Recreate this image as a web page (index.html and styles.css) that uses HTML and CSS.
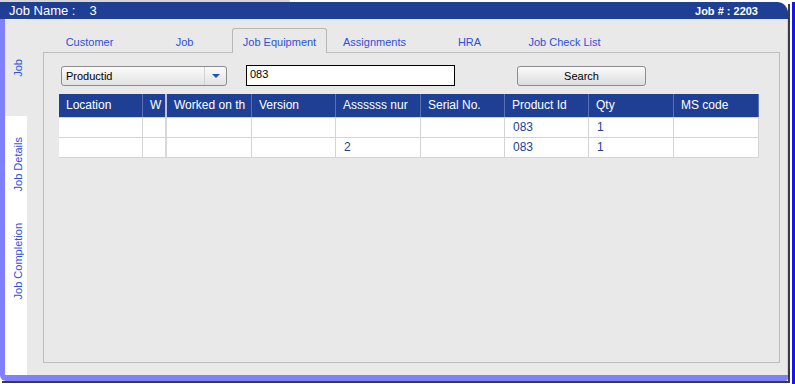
FILE: index.html
```html
<!DOCTYPE html>
<html lang="en">
<head>
    <meta charset="UTF-8">
    <title>Job Equipment</title>
    <link rel="stylesheet" href="styles.css">
</head>
<body>
    <div class="window">
        <div class="topline"></div>
        <div class="screen">
            <div class="frame">
                <div class="titlebar">
                    <span class="job-name">Job Name :<span class="job-val">3</span></span>
                    <span class="job-no">Job # : 2203</span>
                </div>
                <div class="frame-body">
                    <div class="side-tabs">
                        <div class="side-tab active"><span>Job</span></div>
                        <div class="side-tab"><span>Job Details</span></div>
                        <div class="side-tab"><span>Job Completion</span></div>
                    </div>
                    <div class="content">
                        <div class="tabs">
                            <div class="tab">Customer</div>
                            <div class="tab">Job</div>
                            <div class="tab active">Job Equipment</div>
                            <div class="tab">Assignments</div>
                            <div class="tab">HRA</div>
                            <div class="tab">Job Check List</div>
                        </div>
                        <div class="panel">
                            <div class="filters">
                                <div class="combo">
                                    <span class="combo-text">Productid</span>
                                    <span class="combo-arrow"><span class="tri"></span></span>
                                </div>
                                <div class="search-input">083</div>
                                <button class="btn">Search</button>
                            </div>

                            <div class="grid">
                                <div class="row head">
                                    <div class="cell">Location</div>
                                    <div class="cell w">W</div>
                                    <div class="cell">Worked on th</div>
                                    <div class="cell">Version</div>
                                    <div class="cell">Assssss nur</div>
                                    <div class="cell">Serial No.</div>
                                    <div class="cell">Product Id</div>
                                    <div class="cell">Qty</div>
                                    <div class="cell">MS code</div>
                                </div>
                                <div class="row">
                                    <div class="cell"></div>
                                    <div class="cell w"></div>
                                    <div class="cell"></div>
                                    <div class="cell"></div>
                                    <div class="cell"></div>
                                    <div class="cell"></div>
                                    <div class="cell">083</div>
                                    <div class="cell">1</div>
                                    <div class="cell"></div>
                                </div>
                                <div class="row">
                                    <div class="cell"></div>
                                    <div class="cell w"></div>
                                    <div class="cell"></div>
                                    <div class="cell"></div>
                                    <div class="cell">2</div>
                                    <div class="cell"></div>
                                    <div class="cell">083</div>
                                    <div class="cell">1</div>
                                    <div class="cell"></div>
                                </div>
                            </div>
                        </div>
                    </div>
                </div>
            </div>
            <div class="edge"></div>
        </div>
    </div>
</body>
</html>
```

FILE: styles.css
```css
* { margin: 0; padding: 0; box-sizing: border-box; }
body { font-family: "Liberation Sans", Arial, sans-serif; background: #fff; }
.window { width: 795px; height: 384px; overflow: hidden; }
.topline { height: 2px; background: linear-gradient(to right, #d6d6d6 290px, #fff 290px); }
.screen { display: flex; height: 382px; }
.frame { width: 788px; height: 379px; display: flex; flex-direction: column; box-shadow: 2px 2px 0 #3c3c3c; }
.edge { width: 3px; margin-left: 4px; background: #1414ee; }

.titlebar { height: 17px; background: #1e3f94; color: #fff; border-top-right-radius: 11px; display: flex; justify-content: space-between; align-items: center; padding: 0 30px 0 9px; }
.job-name { font-size: 13px; }
.job-val { margin-left: 14px; }
.job-no { font-size: 11px; font-weight: bold; }

.frame-body { flex: 1; display: flex; border-left: 5px solid #8080ff; border-bottom: 6px solid #8080ff; border-bottom-left-radius: 6px; border-bottom-right-radius: 3px; }
.side-tabs { width: 22px; background: #fff; }
.side-tab { height: 97px; display: flex; align-items: center; justify-content: center; padding-left: 3px; }
.side-tab span { writing-mode: vertical-rl; transform: rotate(180deg); font-size: 11px; color: #2e50dc; white-space: nowrap; }
.side-tab.active { background: #e9e9e9; border-top: 1px solid #fafafa; }

.content { flex: 1; background: #e9e9e9; padding: 9px 7px 12px 15px; display: flex; flex-direction: column; border-right: 1px solid #d0d0d0; }
.tabs { display: flex; height: 24px; }
.tab { width: 95px; text-align: center; font-size: 11px; line-height: 13px; padding-top: 8px; color: #2e50dc; }
.tab.active { height: 25px; border: 1px solid #b8b8b8; border-bottom: 0; border-radius: 3px 3px 0 0; background: #e9e9e9; padding-top: 7px; position: relative; z-index: 1; }

.panel { flex: 1; margin-left: 1px; border: 1px solid #bdbdbd; padding: 12px 15px; }
.filters { display: flex; align-items: center; height: 21px; }
.combo { margin-left: 2px; width: 166px; height: 20px; border: 1px solid #8c8c8c; border-radius: 3px; background: linear-gradient(#fbfbfb, #e2e2e2); display: flex; font-size: 11px; }
.combo-text { flex: 1; padding-left: 4px; line-height: 18px; color: #000; }
.combo-arrow { width: 22px; border-left: 1px solid #d2d2d2; display: flex; align-items: center; justify-content: center; }
.tri { width: 0; height: 0; border-left: 4px solid transparent; border-right: 4px solid transparent; border-top: 4px solid #1f4fb8; }
.search-input { margin-left: 19px; width: 209px; height: 21px; border: 1px solid #000; background: #fff; font-size: 11px; padding: 1px 3px; line-height: 15px; }
.btn { margin-left: 62px; width: 129px; height: 20px; border: 1px solid #8c8c8c; border-radius: 3px; background: linear-gradient(#fbfbfb, #dcdcdc); font-family: "Liberation Sans", Arial, sans-serif; font-size: 11px; color: #000; }

.grid { margin-top: 8px; width: 700px; border-bottom: 1px solid #d4d4d4; }
.row { display: grid; grid-template-columns: 84px 24px 85px 84px 85px 84px 84px 85px 85px; height: 20px; border-top: 1px solid #d4d4d4; background: #fff; }
.row .cell { font-size: 12px; line-height: 19px; padding-left: 8px; color: #1e3f94; border-right: 1px solid #d4d4d4; white-space: nowrap; overflow: hidden; }
.row .cell.w { border-right: 2px solid #d8d8d8; }
.row.head { height: 23px; border-top: 0; background: #1e3f94; }
.row.head .cell { color: #fff; line-height: 23px; padding-left: 7px; border-right: 1px solid #5a6fb4; }
.row.head .cell.w { border-right: 2px solid #b8c0dc; }
```
